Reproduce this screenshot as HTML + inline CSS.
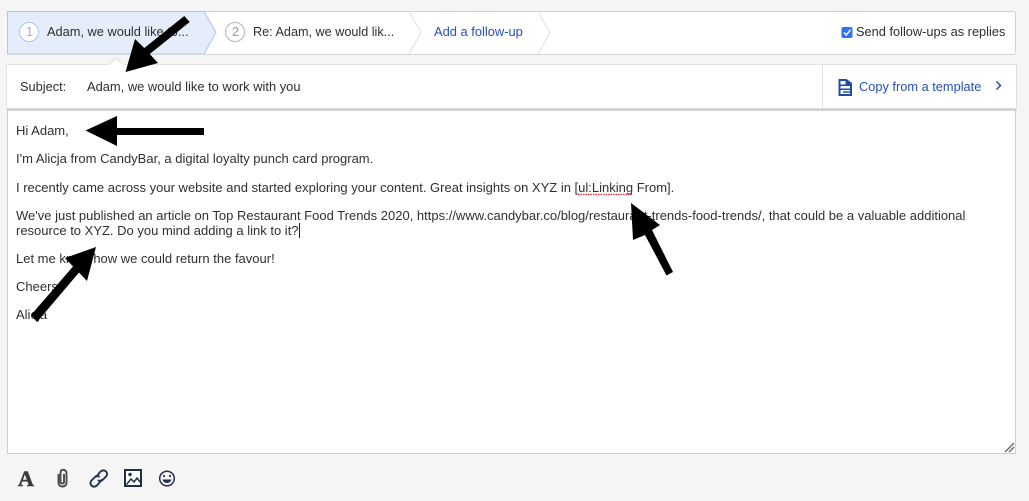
<!DOCTYPE html>
<html><head><meta charset="utf-8"><style>
html,body{margin:0;padding:0}
body{width:1029px;height:501px;background:#f5f5f5;position:relative;overflow:hidden;font-family:"Liberation Sans",sans-serif;color:#333}
.a{position:absolute;white-space:nowrap}
.t{font-size:12.8px;line-height:16px;color:#2e2e2e}
.b{font-size:13px;line-height:16px;color:#303030}
svg{position:absolute;left:0;top:0}
</style></head><body>
<div class="a" style="left:7px;top:11px;width:1009px;height:44px;background:#fff;border:1px solid #d2d2d2;border-radius:3px;box-sizing:border-box"></div>
<div class="a" style="left:6px;top:64px;width:1011px;height:46px;background:#fff;border:1px solid #e0e0e0;border-bottom:2px solid #d6d6d6;box-sizing:border-box"></div>
<div class="a" style="left:7px;top:110px;width:1009px;height:344px;background:#fff;border:1px solid #cfcfcf;box-sizing:border-box"></div>
<div class="a" style="left:822px;top:65px;width:1px;height:43px;background:#e2e2e2"></div>
<svg width="1029" height="501" viewBox="0 0 1029 501">
<path d="M7.500 11.500H204L216 32.500L204 54H7.500Z" fill="#e5edfb" stroke="#a9c6f5"/>
<path d="M7.500 54.500H204" stroke="#d5d9e0" fill="none"/>
<path d="M409 11.500L421 32.500L409 54M538 11.500L550 32.500L538 54" fill="none" stroke="#dedede"/>
<path d="M109 64.500L116 58L123 64.500" fill="#fff" stroke="#dcdcdc"/>
<path d="M109 65H123" stroke="#fff" stroke-width="2"/>
<circle cx="29" cy="32" r="9.500" fill="#fff" stroke="#a9c6f5"/>
<circle cx="235" cy="32" r="9.500" fill="#fff" stroke="#b5b5b5"/>
<rect x="841.500" y="27" width="11" height="11" rx="2" fill="#2f74ee"/>
<path d="M844 32.500L846.300 35L850.500 29.800" fill="none" stroke="#fff" stroke-width="1.500"/>
<path d="M838.500 79H846.500L852 83V96H838.500Z" fill="#1e4aa8"/>
<path d="M840.500 81H845.500V84.500H840.500ZM840.500 86H850V88.500H840.500ZM840.500 90H850V94H840.500Z" fill="#fff"/>
<path d="M843 91.300H850V92.700H843Z" fill="#1e4aa8"/>
<path d="M996.500 81.500L1000.500 85.500L996.500 89.500" fill="none" stroke="#1e4aa8" stroke-width="1.400"/>
<path d="M1005 452L1014 443M1009 452L1014 447" stroke="#666" stroke-width="1.400" fill="none"/>
<path d="M578 194.500H632" fill="none" stroke="#e8333a" stroke-width="1.500" stroke-dasharray="1.500 1"/>
<path d="M299.500 223V238" stroke="#222" stroke-width="1"/>
</svg>
<div class="a" style="left:24px;top:24px;width:11px;text-align:center;font-size:13px;line-height:16px;color:#8fb4f0">1</div>
<div class="a" style="left:230px;top:24px;width:11px;text-align:center;font-size:13px;line-height:16px;color:#999">2</div>
<div class="a t" style="left:47px;top:24px">Adam, we would like to...</div>
<div class="a t" style="left:253px;top:24px;font-size:12.650px">Re: Adam, we would lik...</div>
<div class="a t" style="left:434px;top:24px;color:#2450b8;font-size:12.900px">Add a follow-up</div>
<div class="a t" style="left:856px;top:24px">Send follow-ups as replies</div>
<div class="a t" style="left:20px;top:79px">Subject:</div>
<div class="a t" style="left:87px;top:79px;font-size:12.900px">Adam, we would like to work with you</div>
<div class="a t" style="left:859px;top:79px;color:#2450b8">Copy from a template</div>
<div class="a b" style="left:16px;top:123px">Hi Adam,</div>
<div class="a b" style="left:16px;top:151px">I'm Alicja from CandyBar, a digital loyalty punch card program.</div>
<div class="a b" style="left:16px;top:180px">I recently came across your website and started exploring your content. Great insights on XYZ in [ul:Linking From].</div>
<div class="a b" style="left:16px;top:208px">We've just published an article on Top Restaurant Food Trends 2020, https://www.candybar.co/blog/restaurant-trends-food-trends/, that could be a valuable additional</div>
<div class="a b" style="left:16px;top:223px">resource to XYZ. Do you mind adding a link to it?</div>
<div class="a b" style="left:16px;top:251px">Let me know how we could return the favour!</div>
<div class="a b" style="left:16px;top:279px">Cheers,</div>
<div class="a b" style="left:16px;top:307px">Alicja</div>
<div class="a" style="left:18px;top:468px;font-family:'Liberation Serif',serif;font-weight:bold;font-size:22px;line-height:22px;color:#3a3a3a;-webkit-text-stroke:.6px #3a3a3a">A</div>
<svg width="1029" height="501" viewBox="0 0 1029 501">
<path d="M58.500 474V482.500Q58.500 486.500 62.500 486.500Q66.500 486.500 66.500 482.500V473.500Q66.500 469.800 62.800 469.800Q60.500 469.800 60.500 473V482Q60.500 483.500 62.500 483.500Q64 483.500 64 482V474" fill="none" stroke="#4a4a4a" stroke-width="1.900"/>
<g fill="none" stroke="#24344f" stroke-width="1.900" stroke-linecap="round">
<path d="M96.500 476.500L100.500 471.500Q103 469.500 105.500 471Q108 473 106.500 476L102 480.500Q100 481.500 98.500 480.500"/>
<path d="M101.500 480L97 485.500Q94.500 487.500 92 486Q89.500 484 91 481L95.500 476.500Q97.500 475.500 99 476.500"/>
</g>
<rect x="125" y="470" width="16" height="16" fill="#fff" stroke="#1f2f4a" stroke-width="2"/>
<path d="M126.500 484.500L131 479L134 482L137 478L140 482" fill="none" stroke="#1f2f4a" stroke-width="1.500"/>
<circle cx="130" cy="474.500" r="1.700" fill="#1f2f4a"/>
<circle cx="167" cy="478.500" r="7.300" fill="none" stroke="#24344f" stroke-width="1.500"/>
<circle cx="164" cy="476" r="1.100" fill="#24344f"/><circle cx="170" cy="476" r="1.100" fill="#24344f"/>
<path d="M162.500 479.500H171.500Q170.500 483 167 483Q163.500 483 162.500 479.500Z" fill="#24344f"/>
<g fill="#000">
<path d="M125.500 72L158 63L149.700 54L189.700 22L184.300 16L144.300 48L135 39Z"/>
<path d="M85.500 130.500L117 116V128H204V135H117V146Z"/>
<path d="M96 247L65 258L73 266.500L31 315L37 322L79 272.500L87 281Z"/>
<path d="M631 203L660 225L652 230L673 272L666.500 275.500L645 235L633 240Z"/>
</g>
</svg>
</body></html>
